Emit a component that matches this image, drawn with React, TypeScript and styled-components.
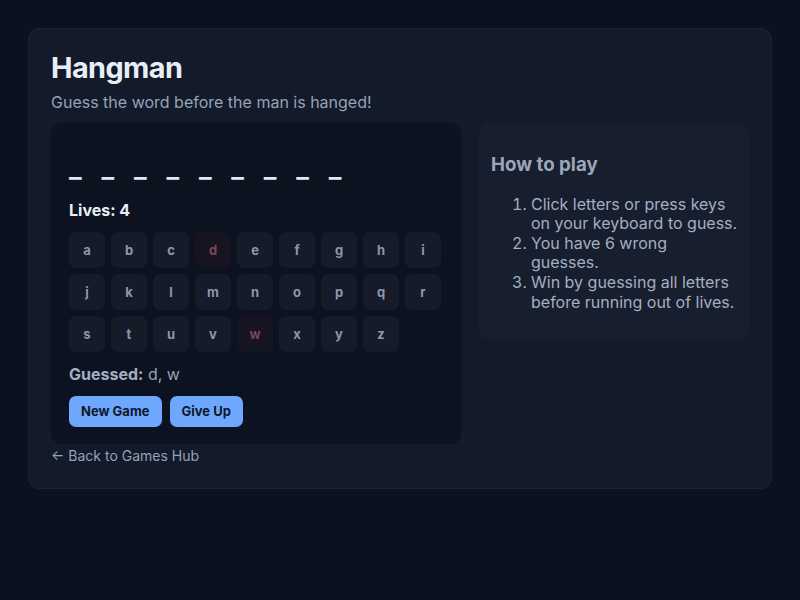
import React from "react";
import styled, { createGlobalStyle } from "styled-components";

const Global = createGlobalStyle`
  html, body { margin: 0; padding: 0; }
  body {
    background: #0b1120;
    font-family: Inter, "Noto Sans", "Liberation Sans", sans-serif;
    color: #e2e8f0;
    min-height: 600px;
  }
  * { box-sizing: border-box; }
`;

const Page = styled.div`
  padding: 28px;
`;

const Card = styled.div`
  background: #131a29;
  border: 1px solid rgba(255, 255, 255, 0.04);
  border-radius: 12px;
  padding: 22px 22px 22px;
`;

const Title = styled.h1`
  margin: 0;
  font-size: 28.8px;
  line-height: 1.2;
  font-weight: 700;
  letter-spacing: -0.02em;
  color: #e8eef8;
`;

const Subtitle = styled.p`
  margin: 4px 0 9px;
  font-size: 16px;
  line-height: 24px;
  color: #94a3b8;
`;

const Layout = styled.div`
  display: grid;
  grid-template-columns: 410px 270px;
  gap: 18px;
  align-items: start;
`;

const GamePanel = styled.div`
  background: #0c1220;
  border-radius: 10px;
  padding: 18px 18px 17px;
`;

const Word = styled.div`
  display: flex;
  gap: 19.8px;
  margin: 9px 0 12px;
  font-size: 27px;
  font-weight: 600;
  line-height: 36px;
  color: #e2e8f0;
`;

const Slot = styled.span`
  display: inline-block;
`;

const Lives = styled.div`
  font-size: 16px;
  font-weight: 700;
  line-height: 24px;
  color: #e8eef8;
  margin-bottom: 10px;
`;

const Keys = styled.div`
  display: flex;
  flex-wrap: wrap;
  gap: 6px;
`;

const Key = styled.button<{ $wrong?: boolean }>`
  width: 36px;
  height: 36px;
  border: none;
  border-radius: 7px;
  padding: 0;
  font-family: inherit;
  font-size: 13px;
  font-weight: 700;
  background: ${(p) => (p.$wrong ? "#161420" : "#151b28")};
  color: ${(p) => (p.$wrong ? "#7e4656" : "#8d97aa")};
  cursor: pointer;
`;

const Guessed = styled.div`
  margin-top: 12px;
  font-size: 16px;
  line-height: 20px;
  color: #94a3b8;
  & b { font-weight: 700; color: #a3afc2; }
`;

const Buttons = styled.div`
  display: flex;
  gap: 8px;
  margin-top: 12px;
`;

const Button = styled.button`
  height: 31px;
  padding: 0 12px;
  border: none;
  border-radius: 7px;
  background: #6ea8fe;
  color: #0f172a;
  font-family: inherit;
  font-size: 13px;
  font-weight: 700;
  cursor: pointer;
`;

const HelpPanel = styled.div`
  background: #171e2d;
  border-radius: 10px;
  padding: 12px 11px 12px 12px;
  color: #94a3b8;
`;

const HelpTitle = styled.h3`
  margin: 19px 0 19px;
  font-size: 18.72px;
  line-height: 22px;
  font-weight: 700;
  color: #9aa6b9;
`;

const Steps = styled.ol`
  margin: 16px 0;
  padding-left: 40px;
  font-size: 16px;
  line-height: 19.6px;
  color: #a3afc2;
`;

const BackLink = styled.a`
  display: inline-block;
  margin-top: 1px;
  font-size: 14px;
  line-height: 21px;
  color: #94a3b8;
  text-decoration: none;
`;

const letters = "abcdefghijklmnopqrstuvwxyz".split("");
const wrong = new Set(["d", "w"]);

export default function App() {
  return (
    <>
      <Global />
      <Page>
        <Card>
          <Title>Hangman</Title>
          <Subtitle>Guess the word before the man is hanged!</Subtitle>
          <Layout>
            <GamePanel>
              <Word>
                {Array.from({ length: 9 }).map((_, i) => (
                  <Slot key={i}>_</Slot>
                ))}
              </Word>
              <Lives>Lives: 4</Lives>
              <Keys>
                {letters.map((l) => (
                  <Key key={l} $wrong={wrong.has(l)}>
                    {l}
                  </Key>
                ))}
              </Keys>
              <Guessed>
                <b>Guessed:</b> d, w
              </Guessed>
              <Buttons>
                <Button>New Game</Button>
                <Button>Give Up</Button>
              </Buttons>
            </GamePanel>
            <HelpPanel>
              <HelpTitle>How to play</HelpTitle>
              <Steps>
                <li>Click letters or press keys on your keyboard to guess.</li>
                <li>You have 6 wrong guesses.</li>
                <li>Win by guessing all letters before running out of lives.</li>
              </Steps>
            </HelpPanel>
          </Layout>
          <BackLink href="#">← Back to Games Hub</BackLink>
        </Card>
      </Page>
    </>
  );
}
